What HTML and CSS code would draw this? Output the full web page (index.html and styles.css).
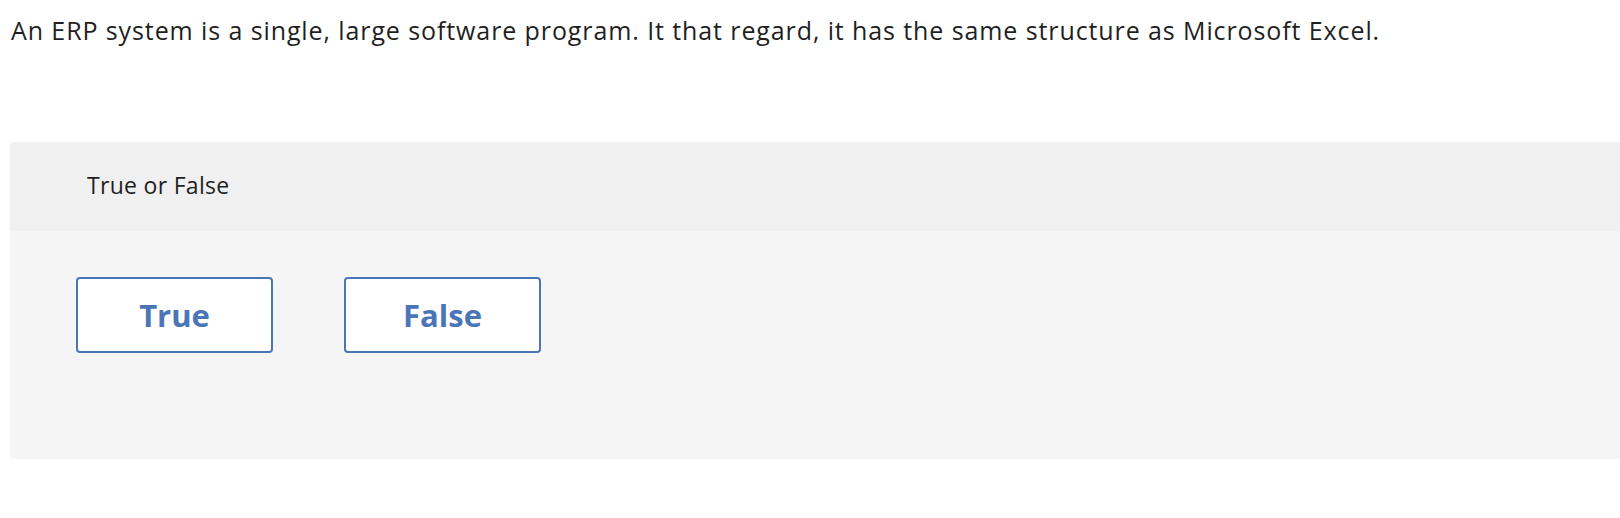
FILE: index.html
```html
<!DOCTYPE html>
<html lang="en">
<head>
    <meta charset="UTF-8">
    <title>True or False</title>
    <link rel="stylesheet" href="styles.css">
</head>
<body>
    <p class="question">An ERP system is a single, large software program. It that regard, it has the same structure as Microsoft Excel.</p>

    <div class="answer-panel">
        <div class="panel-head">True or False</div>
        <div class="panel-body">
            <button class="choice">True</button>
            <button class="choice">False</button>
        </div>
    </div>
</body>
</html>
```

FILE: styles.css
```css
* {
    margin: 0;
    padding: 0;
    box-sizing: border-box;
}
body {
    background: #fff;
    color: #1f1f1f;
    font-family: "Open Sans", "Liberation Sans", sans-serif;
}
.question {
    font-size: 25px;
    line-height: 32px;
    letter-spacing: 0.9px;
    padding: 14px 0 0 11px;
}
.answer-panel {
    margin: 96px 0 0 10px;
    border-radius: 4px 0 0 4px;
    overflow: hidden;
}
.panel-head {
    background: #f0f0f0;
    height: 89px;
    padding: 28px 0 0 77px;
    font-size: 23px;
    line-height: 30px;
    letter-spacing: 0.3px;
}
.panel-body {
    background: #f5f5f5;
    height: 228px;
    padding: 46px 0 0 66px;
    display: flex;
    gap: 71px;
}
.choice {
    width: 197px;
    height: 76px;
    background: #fff;
    border: 2px solid #4a76b9;
    border-radius: 4px;
    color: #4a76b8;
    font-family: inherit;
    font-size: 31px;
    font-weight: 700;
    cursor: pointer;
}
```
